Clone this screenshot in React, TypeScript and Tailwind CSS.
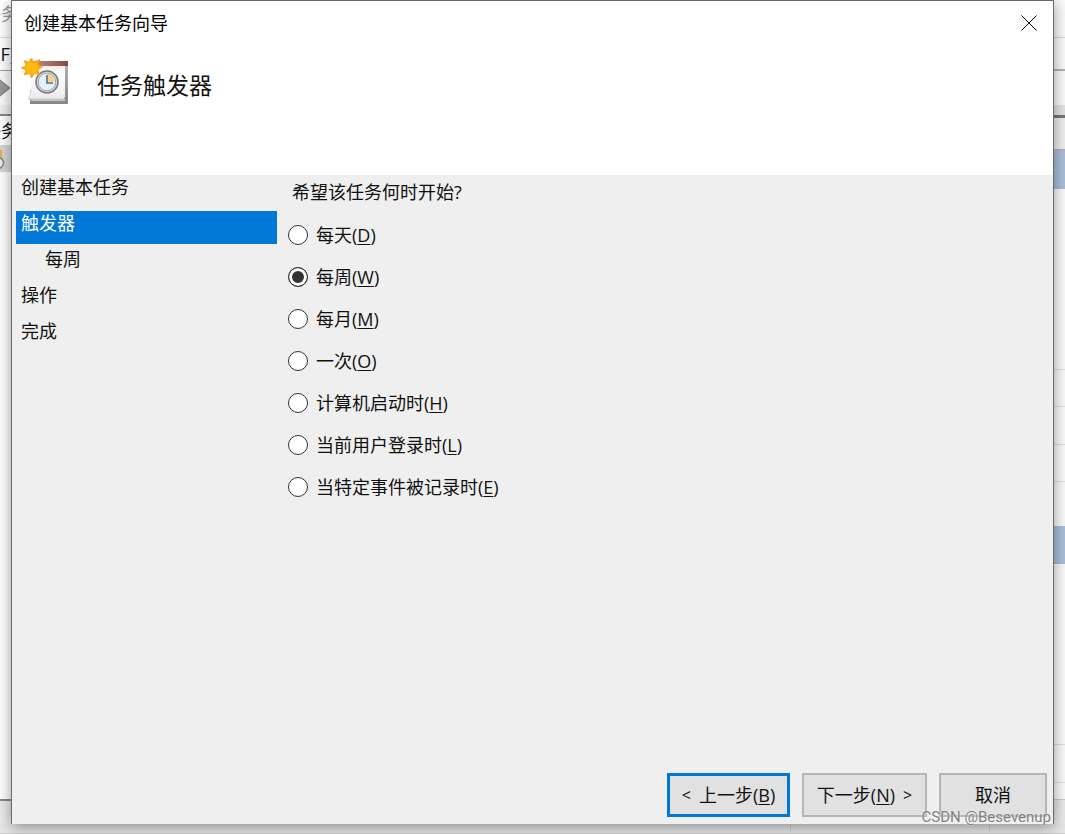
import { useState } from "react";
import type { ReactNode } from "react";

const steps = [
  { label: "创建基本任务" },
  { label: "触发器", current: true },
  { label: "每周", nested: true },
  { label: "操作" },
  { label: "完成" },
];

const triggers = [
  { label: "每天", accessKey: "D" },
  { label: "每周", accessKey: "W" },
  { label: "每月", accessKey: "M" },
  { label: "一次", accessKey: "O" },
  { label: "计算机启动时", accessKey: "H" },
  { label: "当前用户登录时", accessKey: "L" },
  { label: "当特定事件被记录时", accessKey: "E" },
];

function AccessKey({ letter }: { letter: string }) {
  return (
    <>
      (<span className="underline decoration-1 underline-offset-2">{letter}</span>)
    </>
  );
}

function CalendarIcon() {
  return (
    <svg width="50" height="50" viewBox="0 0 50 50" aria-hidden="true">
      <defs>
        <linearGradient id="page" x1="0" y1="0" x2="0" y2="1">
          <stop offset="0" stopColor="#e6e4e2" />
          <stop offset="0.3" stopColor="#fdfdfd" />
          <stop offset="1" stopColor="#ececec" />
        </linearGradient>
        <linearGradient id="edge" x1="0" y1="0" x2="0" y2="1">
          <stop offset="0" stopColor="#b4b4b4" />
          <stop offset="1" stopColor="#868686" />
        </linearGradient>
        <linearGradient id="binding" x1="0" y1="0" x2="1" y2="0">
          <stop offset="0" stopColor="#c39380" />
          <stop offset="1" stopColor="#854b3c" />
        </linearGradient>
        <radialGradient id="sun">
          <stop offset="0" stopColor="#ffc928" />
          <stop offset="1" stopColor="#f79a08" />
        </radialGradient>
      </defs>
      <path d="M9 40H44V6H47V48H9Z" fill="url(#edge)" />
      <path d="M10 43H44V45H10Z" fill="#c4c4c4" />
      <path d="M10 7H44V40Q44 43 41 43H7Q10 39 10 33Z" fill="url(#page)" />
      <path d="M10 33Q10 39 7 43H41" fill="none" stroke="#c4c4c4" strokeWidth="0.8" />
      <path d="M10 5H47V10H10Z" fill="url(#binding)" />
      <circle cx="26" cy="26" r="11" fill="#d9dadb" stroke="#7b7e81" strokeWidth="1.6" />
      <circle cx="26" cy="26" r="8.8" fill="#e5eff7" stroke="#a1a6aa" />
      <path d="M26 26V17.5A8.5 8.5 0 0 1 34 26Z" fill="#f0d48f" />
      <path d="M26 19V27H32" fill="none" stroke="#5a6e83" strokeWidth="1.6" />
      <path
        d="M10.5 2L12.5 6L19 3.5L17 8.5L21.5 11L17 13.5L18.5 18.5L13.5 17.5L10.5 22L8.5 17.5L3 19L5 14L0 12L5 9.5L3 4.5L8 6Z"
        fill="url(#sun)"
        stroke="#f5a01b"
        strokeWidth="0.7"
      />
      <circle cx="11" cy="12" r="5.5" fill="#ffb914" />
    </svg>
  );
}

function LeftBackdrop() {
  return (
    <div
      aria-hidden="true"
      className="flex w-[11px] shrink-0 flex-col overflow-hidden bg-white whitespace-nowrap"
    >
      <div className="flex h-[37px] justify-end pt-1 leading-[20px] text-[#9a9a9a]">
        <span className="-mr-2">任务</span>
      </div>
      <div className="flex h-[34px] justify-end border-y border-t-[#dcdcdc] border-b-[#a5a5a5] pt-1 leading-[24px]">
        <span className="-mr-1">(F)</span>
      </div>
      <div className="flex h-[34px] items-center bg-[#fafafa]">
        <svg width="11" height="28" viewBox="0 0 11 28">
          <path d="M-6 1L10 14L-6 27Z" fill="#989898" stroke="#777" />
        </svg>
      </div>
      <div className="h-[11px] border-b-2 border-[#858585] bg-[#eeeeee]" />
      <div className="flex h-[29px] justify-end leading-[30px]">
        <span className="-mr-2">任务</span>
      </div>
      <div className="h-[27px] bg-[#d6d6d6]">
        <svg width="11" height="27" viewBox="0 0 11 27">
          <path d="M0 5H2V15H0Z" fill="#e9b44c" />
          <circle cx="-2" cy="18" r="5.5" fill="#e8eef3" stroke="#858585" strokeWidth="1.5" />
        </svg>
      </div>
      <div className="flex-1" />
      <div className="h-[25px] border-t-2 border-[#858b93] bg-[#ebebeb]" />
    </div>
  );
}

function RightBackdrop() {
  return (
    <div aria-hidden="true" className="flex w-[11px] shrink-0 flex-col bg-[#fafafa]">
      <div className="h-[38px] border-b border-[#d8d8d8]" />
      <div className="h-[33px] border-b-2 border-[#b5b5b5]" />
      <div className="h-[34px]" />
      <div className="h-[13px] border-b-[3px] border-[#777777] bg-[#e3e3e3]" />
      <div className="h-[33px] border-b-2 border-[#b5b5b5] bg-[#eeeeee]" />
      <div className="h-[38px] bg-[#a8bfda]" />
      <div className="h-[181px] border-b border-[#e0e0e0]" />
      <div className="h-[37px] border-b border-[#e0e0e0]" />
      <div className="h-[38px] border-b border-[#e0e0e0]" />
      <div className="h-[37px] border-b border-[#e0e0e0]" />
      <div className="h-11" />
      <div className="h-[38px] bg-[#a8bfda]" />
      <div className="flex-1" />
      <div className="h-[38px] border-t border-[#e0e0e0]" />
      <div className="h-[18px] border-y border-t-[#e0e0e0] border-b-[#c8c8c8]" />
      <div className="h-[24px] bg-[#e9e9e9]" />
    </div>
  );
}

function WizardButton({ primary, width, children }: { primary?: boolean; width: string; children: ReactNode }) {
  return (
    <button
      type="button"
      className={`flex h-11 items-center justify-center gap-2 bg-[#e1e1e1] leading-[24px] ${width} ${
        primary ? "border-[3px] border-[#0078d7]" : "border-2 border-[#b5b5b5]"
      }`}
    >
      {children}
    </button>
  );
}

export default function App() {
  const [selected, setSelected] = useState("W");

  return (
    <div className="relative flex min-h-screen flex-col bg-[#e6e6e6] font-['Open_Sans','Noto_Sans_CJK_SC',sans-serif] text-[18px] text-[#111111]">
      <div className="flex flex-1">
        <LeftBackdrop />
        <main className="z-10 flex min-w-0 flex-1 flex-col border-x border-t border-[#6b6b6b] bg-[#efefef] shadow-[0_3px_14px_rgba(0,0,0,0.4)]">
          <header className="h-[174px] bg-white">
            <div className="flex items-center justify-between pt-[10px] pr-4 pl-3">
              <h1 className="leading-[24px] text-black">创建基本任务向导</h1>
              <button type="button" aria-label="关闭" className="text-black">
                <svg width="16" height="16" viewBox="0 0 16 16" className="block" aria-hidden="true">
                  <path d="M0.5 0.5L15.5 15.5M15.5 0.5L0.5 15.5" stroke="currentColor" strokeWidth="1" />
                </svg>
              </button>
            </div>
            <div className="flex gap-[26px] pt-[21px] pl-[9px]">
              <CalendarIcon />
              <h2 className="pt-4 text-[23px] leading-[26px]">任务触发器</h2>
            </div>
          </header>

          <div className="flex flex-1">
            <nav className="w-[265px] shrink-0 pl-1">
              <ol>
                {steps.map((step) => (
                  <li key={step.label} className="h-9">
                    <div
                      aria-current={step.current ? "step" : undefined}
                      className={`h-[33px] leading-[24px] ${step.nested ? "pl-[29px]" : "pl-[5px]"} ${
                        step.current ? "bg-[#0078d7] text-white" : ""
                      }`}
                    >
                      {step.label}
                    </div>
                  </li>
                ))}
              </ol>
            </nav>

            <fieldset className="pt-1 pl-[11px]">
              <legend className="float-left w-full pl-1 leading-[26px]">希望该任务何时开始?</legend>
              <div className="clear-both flex flex-col pt-[9px]">
                {triggers.map(({ label, accessKey }) => (
                  <label key={accessKey} className="flex h-[42px] items-center gap-2">
                    <input
                      type="radio"
                      name="trigger"
                      value={accessKey}
                      checked={selected === accessKey}
                      onChange={() => setSelected(accessKey)}
                      className="size-5 appearance-none rounded-full border border-[#333333] bg-white checked:bg-[#333333] checked:shadow-[inset_0_0_0_3px_white]"
                    />
                    <span className="leading-[26px]">
                      {label}
                      <AccessKey letter={accessKey} />
                    </span>
                  </label>
                ))}
              </div>
            </fieldset>
          </div>

          <footer className="flex justify-end gap-3 pr-[6px] pb-[7px]">
            <WizardButton primary width="w-[123px]">
              <span className="text-[16px]">&lt;</span>
              <span>
                上一步
                <AccessKey letter="B" />
              </span>
            </WizardButton>
            <WizardButton width="w-[125px]">
              <span>
                下一步
                <AccessKey letter="N" />
              </span>
              <span className="text-[16px]">&gt;</span>
            </WizardButton>
            <WizardButton width="w-[108px]">取消</WizardButton>
          </footer>
        </main>
        <RightBackdrop />
      </div>
      <div aria-hidden="true" className="flex h-[10px] border-b border-[#cccccc]">
        <div className="flex-1" />
        <div className="w-[200px] border-x border-[#cfcfcf]" />
        <div className="w-[75px]" />
      </div>
      <span className="absolute right-[14px] bottom-[7px] z-20 font-['Roboto',sans-serif] text-[15px] leading-[20px] text-[#808080] [text-shadow:0_0_2px_white]">
        CSDN @Besevenup
      </span>
    </div>
  );
}
